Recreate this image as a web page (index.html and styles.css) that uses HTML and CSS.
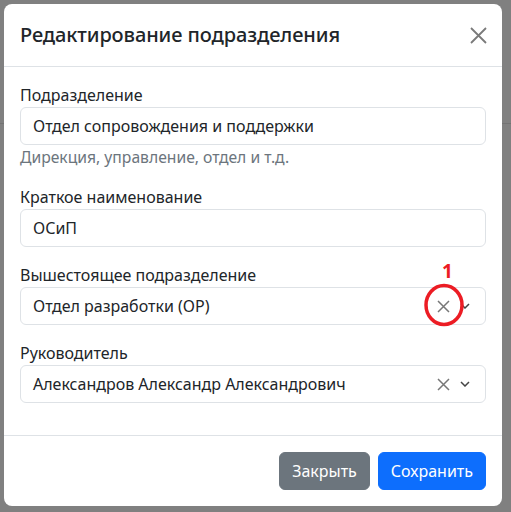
FILE: index.html
```html
<!DOCTYPE html>
<html lang="ru">
<head>
<meta charset="utf-8">
<title>Редактирование подразделения</title>
<link rel="stylesheet" href="styles.css">
</head>
<body>
<div class="modal">
  <div class="modal-header">
    <h5 class="modal-title">Редактирование подразделения</h5>
    <button class="btn-close" type="button" aria-label="Close">
      <svg width="17" height="17" viewBox="0 0 17 17"><path d="M1 1L16 16M16 1L1 16" stroke="#7a7a7a" stroke-width="1.8" fill="none"/></svg>
    </button>
  </div>
  <div class="modal-body">
    <div class="group">
      <label class="label">Подразделение</label>
      <div class="control">Отдел сопровождения и поддержки</div>
      <div class="help">Дирекция, управление, отдел и т.д.</div>
    </div>
    <div class="group">
      <label class="label">Краткое наименование</label>
      <div class="control">ОСиП</div>
    </div>
    <div class="group">
      <label class="label">Вышестоящее подразделение</label>
      <div class="control select">
        <span class="value">Отдел разработки (ОР)</span>
        <span class="icons">
          <svg class="clear" width="13" height="13" viewBox="0 0 13 13"><path d="M1 1L12 12M12 1L1 12" stroke="#777" stroke-width="1.5" fill="none"/></svg>
          <svg class="chev" width="10" height="6" viewBox="0 0 10 6"><path d="M1 1L5 5L9 1" stroke="#444" stroke-width="1.5" fill="none"/></svg>
        </span>
        <span class="mark-num">1</span>
        <svg class="mark-ring" width="44" height="46" viewBox="0 0 44 46"><ellipse cx="22" cy="23" rx="18" ry="19.5" stroke="#ec1c24" stroke-width="3.5" fill="none"/></svg>
      </div>
    </div>
    <div class="group">
      <label class="label">Руководитель</label>
      <div class="control select">
        <span class="value">Александров Александр Александрович</span>
        <span class="icons">
          <svg class="clear" width="13" height="13" viewBox="0 0 13 13"><path d="M1 1L12 12M12 1L1 12" stroke="#777" stroke-width="1.5" fill="none"/></svg>
          <svg class="chev" width="10" height="6" viewBox="0 0 10 6"><path d="M1 1L5 5L9 1" stroke="#444" stroke-width="1.5" fill="none"/></svg>
        </span>
      </div>
    </div>
  </div>
  <div class="modal-footer">
    <button class="btn btn-secondary" type="button">Закрыть</button>
    <button class="btn btn-primary" type="button">Сохранить</button>
  </div>
</div>
</body>
</html>
```
FILE: styles.css
```css
* { box-sizing: border-box; }
html, body { height: 100%; }
body {
  margin: 0;
  background: linear-gradient(to bottom, #808080 0, #808080 123px, #737373 123px, #737373 124px, #808080 124px);
  font-family: "Noto Sans", "Open Sans", sans-serif;
  font-size: 16px;
  line-height: 24px;
  color: #212529;
  padding: 4px 0 0 4px;
}
.modal {
  width: 498px;
  background: #fff;
  border-radius: 8px;
}
.modal-header {
  display: flex;
  align-items: center;
  justify-content: space-between;
  padding: 16px 15px 16px 16px;
  border-bottom: 1px solid #dee2e6;
}
.modal-title {
  margin: 0;
  font-size: 20px;
  line-height: 30px;
  font-weight: 500;
  letter-spacing: -0.1px;
}
.btn-close {
  border: 0;
  background: none;
  padding: 0;
  width: 17px;
  height: 17px;
  display: flex;
}
.modal-body {
  padding: 16px;
}
.group { margin-bottom: 16px; }
.label { display: block; }
.control {
  height: 38px;
  border: 1px solid #dee2e6;
  border-radius: 6px;
  padding: 6px 12px;
  line-height: 24px;
}
.select {
  display: flex;
  align-items: center;
  position: relative;
}
.select .value { flex: 1; }
.icons {
  display: flex;
  align-items: center;
  gap: 10px;
  margin-right: 3px;
}
.help {
  font-size: 15.7px;
  line-height: 24px;
  color: #6c757d;
}
.mark-num {
  position: absolute;
  left: 421px;
  top: -29px;
  color: #ec1c24;
  font-weight: 700;
  font-size: 19px;
  line-height: 24px;
}
.mark-ring {
  position: absolute;
  left: 401px;
  top: -6px;
}
.modal-footer {
  display: flex;
  justify-content: flex-end;
  gap: 8px;
  padding: 16px;
  border-top: 1px solid #dee2e6;
}
.btn {
  font-family: inherit;
  font-size: 16px;
  line-height: 24px;
  padding: 6px 12px;
  border: 1px solid transparent;
  border-radius: 6px;
  color: #fff;
}
.btn-secondary { background: #6c757d; border-color: #6c757d; }
.btn-primary { background: #0d6efd; border-color: #0d6efd; }
```
